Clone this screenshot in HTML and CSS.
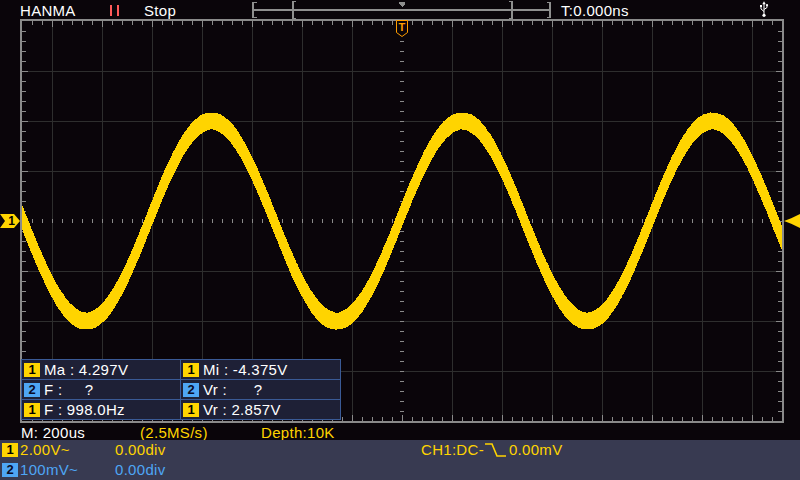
FILE: index.html
```html
<!DOCTYPE html>
<html>
<head>
<meta charset="utf-8">
<title>HANMA Scope</title>
<link rel="stylesheet" href="styles.css">
</head>
<body>
<div class="scope">
  <header class="topbar">
    <span class="brand">HANMA</span>
    <span class="run"><i></i><i></i></span>
    <span class="state">Stop</span>
    <svg class="window" width="300" height="19" viewBox="0 0 300 19" shape-rendering="crispEdges">
      <g fill="#8f8f8f">
        <rect x="2" y="9" width="296" height="2"/>
        <rect x="0" y="2" width="2" height="16"/>
        <rect x="0" y="2" width="5" height="1"/>
        <rect x="0" y="17" width="5" height="1"/>
        <rect x="40" y="1" width="2" height="18"/>
        <rect x="40" y="1" width="4" height="1"/>
        <rect x="40" y="18" width="4" height="1"/>
        <rect x="259" y="1" width="2" height="18"/>
        <rect x="257" y="1" width="4" height="1"/>
        <rect x="257" y="18" width="4" height="1"/>
        <rect x="297" y="2" width="2" height="16"/>
        <rect x="295" y="2" width="4" height="1"/>
        <rect x="295" y="17" width="4" height="1"/>
        <polygon points="147,2 153,2 153,4 150,7 147,4"/>
      </g>
    </svg>
    <span class="trig-time">T:0.000ns</span>
    <svg class="usb" width="10" height="16" viewBox="0 0 10 16">
      <g stroke="#ffffff" stroke-width="1" fill="none">
        <path d="M5 2.5V14"/>
        <path d="M5 10.5L2 8V5.5"/>
        <path d="M5 8.5L8 6.5V5"/>
      </g>
      <g fill="#ffffff">
        <polygon points="3.3,3.2 5,0.3 6.7,3.2"/>
        <rect x="1" y="4" width="2" height="2"/>
        <circle cx="8" cy="4.2" r="1.1"/>
        <circle cx="5" cy="14.3" r="1.6"/>
      </g>
    </svg>
  </header>

  <main class="display">
    <div class="side side-left"><div class="ch-marker">1</div></div>
    <div class="screen">
      <svg class="grid" width="764" height="404" viewBox="0 0 764 404" shape-rendering="crispEdges">
        <defs>
          <clipPath id="inner"><rect x="2" y="2" width="760" height="400"/></clipPath>
        </defs>
        <path class="gridlines" d="M32.5 2V402M82.5 2V402M132.5 2V402M182.5 2V402M232.5 2V402M282.5 2V402M332.5 2V402M432.5 2V402M482.5 2V402M532.5 2V402M582.5 2V402M632.5 2V402M682.5 2V402M732.5 2V402M2 52.5H762M2 102.5H762M2 152.5H762M2 252.5H762M2 302.5H762M2 352.5H762"/>
        <g class="ticks">
          <line x1="382" y1="12" x2="382" y2="402" stroke-width="4" stroke-dasharray="1 9"/>
          <line x1="12" y1="202" x2="762" y2="202" stroke-width="4" stroke-dasharray="1 9"/>
          <line x1="12" y1="4" x2="762" y2="4" stroke-width="4" stroke-dasharray="1 9"/>
          <line x1="12" y1="400" x2="762" y2="400" stroke-width="4" stroke-dasharray="1 9"/>
          <line x1="4" y1="12" x2="4" y2="402" stroke-width="4" stroke-dasharray="1 9"/>
          <line x1="760" y1="12" x2="760" y2="402" stroke-width="4" stroke-dasharray="1 9"/>
          <line x1="32" y1="5" x2="762" y2="5" stroke-width="6" stroke-dasharray="1 49"/>
          <line x1="32" y1="399" x2="762" y2="399" stroke-width="6" stroke-dasharray="1 49"/>
          <line x1="5" y1="52" x2="5" y2="402" stroke-width="6" stroke-dasharray="1 49"/>
          <line x1="759" y1="52" x2="759" y2="402" stroke-width="6" stroke-dasharray="1 49"/>
        </g>
        <polygon id="trace" class="trace" clip-path="url(#inner)" points=""/>
        <rect class="frame" x="1" y="1" width="762" height="402"/>
      </svg>

      <svg class="trig-marker" width="13" height="17" viewBox="0 0 13 17">
        <path d="M0.5 0.5H11.5V12.5L6 16.5L0.5 12.5Z" fill="#0a050a" stroke="#ff9c00" stroke-width="1"/>
        <text x="6" y="11" text-anchor="middle" class="trig-letter">T</text>
      </svg>

      <div class="measure">
        <div class="cell"><span class="badge c1">1</span><span class="val">Ma : 4.297V</span></div>
        <div class="cell"><span class="badge c1">1</span><span class="val">Mi : -4.375V</span></div>
        <div class="cell"><span class="badge c2">2</span><span class="val">F :     ?</span></div>
        <div class="cell"><span class="badge c2">2</span><span class="val">Vr :      ?</span></div>
        <div class="cell"><span class="badge c1">1</span><span class="val">F : 998.0Hz</span></div>
        <div class="cell"><span class="badge c1">1</span><span class="val">Vr : 2.857V</span></div>
      </div>
    </div>
    <div class="side side-right"><div class="level-marker"></div></div>
  </main>

  <div class="acq">
    <span class="timebase">M: 200us</span>
    <span class="rate">(2.5MS/s)</span>
    <span class="depth">Depth:10K</span>
  </div>

  <footer class="status">
    <div class="row row-ch1">
      <span class="badge c1">1</span>
      <span class="scale">2.00V~</span>
      <span class="offset">0.00div</span>
      <span class="trig-info">CH1:DC-</span>
      <svg class="edge" width="21" height="14" viewBox="0 0 21 14">
        <path d="M0 1H7L12 13H21" fill="none" stroke="#ffd400" stroke-width="1.6"/>
      </svg>
      <span class="trig-level">0.00mV</span>
    </div>
    <div class="row row-ch2">
      <span class="badge c2">2</span>
      <span class="scale">100mV~</span>
      <span class="offset">0.00div</span>
    </div>
  </footer>
</div>
<script src="script.js"></script>
</body>
</html>
```

FILE: styles.css
```css
* {
  box-sizing: border-box;
  margin: 0;
  padding: 0;
}

html,
body {
  width: 800px;
  height: 480px;
  overflow: hidden;
  background: #0a050a;
}

body {
  font-family: "Liberation Sans", Arial, sans-serif;
  font-size: 15px;
  letter-spacing: 0.3px;
  color: #ffffff;
}

.scope {
  display: flex;
  flex-direction: column;
  width: 800px;
  height: 480px;
}

/* ---------- top bar ---------- */
.topbar {
  display: flex;
  align-items: flex-start;
  height: 19px;
  padding: 2px 0 0 20px;
  line-height: 17px;
  white-space: nowrap;
}

.brand {
  width: 90px;
}

.run {
  display: flex;
  gap: 5px;
  width: 34px;
  padding-top: 3px;
}

.run i {
  display: block;
  width: 2px;
  height: 11px;
  background: #ff5a5a;
}

.state {
  width: 108px;
}

.window {
  display: block;
  margin-top: -2px;
}

.trig-time {
  width: 198px;
  margin-left: 9px;
}

.usb {
  display: block;
  margin-top: -1px;
}

/* ---------- display ---------- */
.display {
  display: flex;
  height: 404px;
}

.side {
  display: flex;
  align-items: center;
}

.side-left {
  width: 20px;
}

.side-right {
  width: 16px;
}

.ch-marker {
  width: 20px;
  height: 14px;
  padding-left: 3px;
  background: #ffd400;
  color: #000000;
  font-size: 12px;
  font-weight: bold;
  line-height: 14px;
  text-align: center;
  letter-spacing: 0;
  clip-path: polygon(0 0, 70% 0, 100% 50%, 70% 100%, 0 100%, 25% 50%);
}

.level-marker {
  width: 16px;
  height: 14px;
  background: #ffd400;
  clip-path: polygon(0 50%, 45% 30%, 100% 0, 100% 100%, 45% 70%);
}

.screen {
  position: relative;
  width: 764px;
  height: 404px;
}

.grid {
  display: block;
}

.gridlines {
  fill: none;
  stroke: #2e2e2e;
  stroke-width: 1;
}

.ticks line {
  stroke: #8a8a8a;
}

.trace {
  fill: #ffd400;
}

.frame {
  fill: none;
  stroke: #8a8a8a;
  stroke-width: 2;
}

.trig-marker {
  position: absolute;
  left: 376px;
  top: 1px;
}

.trig-letter {
  fill: #ff9c00;
  font-family: "Liberation Sans", Arial, sans-serif;
  font-size: 11px;
  font-weight: bold;
}

/* ---------- measurement table ---------- */
.measure {
  position: absolute;
  left: 1px;
  top: 340px;
  display: grid;
  grid-template-columns: 158px 159px;
  grid-auto-rows: 19px;
  gap: 1px;
  width: 320px;
  padding: 1px;
  background: #3a5a96;
}

.cell {
  display: flex;
  align-items: center;
  gap: 4px;
  padding-left: 2px;
  background: #1e2036;
  line-height: 19px;
  white-space: pre;
}

.badge {
  display: block;
  width: 16px;
  height: 14px;
  flex: none;
  color: #000000;
  font-size: 13px;
  font-weight: bold;
  line-height: 14px;
  text-align: center;
  letter-spacing: 0;
}

.badge.c1 {
  background: #ffd400;
}

.badge.c2 {
  background: #4ea6f5;
  color: #0a0a26;
}

/* ---------- acquisition line ---------- */
.acq {
  display: flex;
  height: 17px;
  padding: 1px 0 0 21px;
  line-height: 17px;
  white-space: nowrap;
}

.timebase {
  width: 119px;
}

.rate {
  width: 121px;
  color: #ffd400;
}

.depth {
  color: #ffd400;
}

/* ---------- status panel ---------- */
.status {
  height: 40px;
  background: #383a51;
}

.row {
  display: flex;
  align-items: center;
  height: 20px;
  padding-left: 2px;
  line-height: 20px;
  white-space: nowrap;
}

.row .scale {
  width: 95px;
  margin-left: 2px;
}

.row .offset {
  width: 306px;
}

.row-ch1 {
  color: #ffd400;
}

.row-ch2 {
  color: #4ea6f5;
}

.edge {
  display: block;
  margin: 0 3px 0 1px;
}
```

FILE: script.js
```js
(function () {
  var trace = document.getElementById('trace');
  var upper = [];
  var lower = [];
  var period = 250.5;
  var phase = 23.6;
  var halfV = 8.3;
  var halfH = 1.6;
  function centre(pageX) {
    return 221 + 100 * Math.sin(2 * Math.PI * (pageX - phase) / period) - 19;
  }
  function jitter(i, s) {
    var v = Math.sin(i * 12.9898 + s * 78.233) * 43758.5453;
    return (v - Math.floor(v)) - 0.5;
  }
  for (var x = 0; x <= 764; x += 1) {
    var lo = Infinity;
    var hi = -Infinity;
    for (var dx = -halfH; dx <= halfH + 0.001; dx += 0.4) {
      var y = centre(x + 20 + dx);
      if (y < lo) { lo = y; }
      if (y > hi) { hi = y; }
    }
    upper.push(x + ',' + (lo - halfV + jitter(x, 1) * 0.8).toFixed(2));
    lower.push(x + ',' + (hi + halfV + jitter(x, 2) * 0.8).toFixed(2));
  }
  trace.setAttribute('points', upper.concat(lower.reverse()).join(' '));
})();
```
